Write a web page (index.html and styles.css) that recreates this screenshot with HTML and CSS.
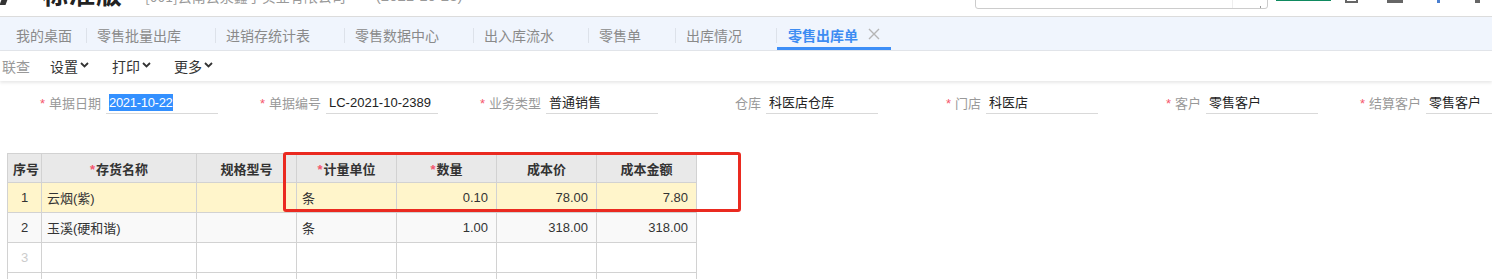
FILE: index.html
```html
<!DOCTYPE html>
<html lang="zh-CN">
<head>
<meta charset="utf-8">
<title>零售出库单</title>
<link rel="stylesheet" href="styles.css">
</head>
<body>
<header class="topbar">
  <span class="logo"></span>
  <span class="title">标准版</span>
  <span class="company">[001]云南云泉鑫宇实业有限公司</span>
  <span class="date">(2021-10-23)</span>
  <span class="spacer"></span>
  <span class="search"><span class="search-div"></span><span class="search-tick"></span></span>
  <span class="green-btn"></span>
  <span class="ico ico-a"></span>
  <span class="ico ico-b"></span>
  <span class="ico ico-c"></span>
  <span class="ico ico-d"></span>
</header>

<nav class="tabs">
  <span class="tab home">我的桌面</span><span class="sep"></span>
  <span class="tab">零售批量出库</span><span class="sep"></span>
  <span class="tab">进销存统计表</span><span class="sep"></span>
  <span class="tab">零售数据中心</span><span class="sep"></span>
  <span class="tab">出入库流水</span><span class="sep"></span>
  <span class="tab">零售单</span><span class="sep"></span>
  <span class="tab">出库情况</span><span class="sep"></span>
  <span class="tab active">零售出库单<span class="close">
    <svg width="12" height="12" viewBox="0 0 12 12"><path d="M1 1L11 11M11 1L1 11" stroke="#b5b5b5" stroke-width="1.4" fill="none"/></svg></span></span>
</nav>

<div class="toolbar">
  <span class="tool disabled">联查</span>
  <span class="tool">设置<svg class="chev" width="9" height="6" viewBox="0 0 9 6"><path d="M1 1L4.5 4.5L8 1" stroke="#333" stroke-width="1.8" fill="none"/></svg></span>
  <span class="tool">打印<svg class="chev" width="9" height="6" viewBox="0 0 9 6"><path d="M1 1L4.5 4.5L8 1" stroke="#333" stroke-width="1.8" fill="none"/></svg></span>
  <span class="tool">更多<svg class="chev" width="9" height="6" viewBox="0 0 9 6"><path d="M1 1L4.5 4.5L8 1" stroke="#333" stroke-width="1.8" fill="none"/></svg></span>
</div>

<form class="form">
  <div class="field"><label class="label"><i class="req">*</i>单据日期</label><div class="input"><span class="selected">2021-10-22</span></div></div>
  <div class="field"><label class="label"><i class="req">*</i>单据编号</label><div class="input">LC-2021-10-2389</div></div>
  <div class="field"><label class="label"><i class="req">*</i>业务类型</label><div class="input">普通销售</div></div>
  <div class="field"><label class="label">仓库</label><div class="input">科医店仓库</div></div>
  <div class="field"><label class="label"><i class="req">*</i>门店</label><div class="input">科医店</div></div>
  <div class="field"><label class="label"><i class="req">*</i>客户</label><div class="input">零售客户</div></div>
  <div class="field"><label class="label"><i class="req">*</i>结算客户</label><div class="input">零售客户</div></div>
</form>

<div class="grid-wrap">
  <table class="grid">
    <colgroup>
      <col class="c-no"><col class="c-name"><col class="c-std"><col class="c-std"><col class="c-std"><col class="c-std"><col class="c-std">
    </colgroup>
    <thead>
      <tr><th>序号</th><th><i class="req">*</i>存货名称</th><th>规格型号</th><th><i class="req">*</i>计量单位</th><th><i class="req">*</i>数量</th><th>成本价</th><th>成本金额</th></tr>
    </thead>
    <tbody>
      <tr class="current"><td class="no">1</td><td>云烟(紫)</td><td></td><td>条</td><td class="num">0.10</td><td class="num">78.00</td><td class="num">7.80</td></tr>
      <tr class="alt"><td class="no">2</td><td>玉溪(硬和谐)</td><td></td><td>条</td><td class="num">1.00</td><td class="num">318.00</td><td class="num">318.00</td></tr>
      <tr><td class="no empty">3</td><td></td><td></td><td></td><td></td><td></td><td></td></tr>
      <tr><td class="no empty">4</td><td></td><td></td><td></td><td></td><td></td><td></td></tr>
    </tbody>
  </table>
  <div class="mark"></div>
</div>
</body>
</html>
```
FILE: styles.css
```css
html, body {
  margin: 0;
  padding: 0;
  background: #fff;
  overflow: hidden;
}
body {
  font-family: "Liberation Sans", "Noto Sans CJK SC", sans-serif;
  font-size: 13px;
  color: #333;
}

/* ---------- top bar (mostly scrolled out of view) ---------- */
.topbar {
  height: 16px;
  border-bottom: 1px solid #dcdcdc;
  display: flex;
  align-items: flex-end;
  overflow: hidden;
}
.logo {
  width: 6px;
  height: 30px;
  margin: 0 0 11px 5px;
  background: #333;
  transform: skewX(-20deg);
}
.title {
  margin: 0 0 8px 31px;
  font-family: "Noto Sans CJK SC", sans-serif;
  font-weight: 700;
  font-size: 26px;
  line-height: 30px;
  color: #222;
  letter-spacing: 1px;
}
.company {
  margin: 0 0 10px 22px;
  font-family: "Noto Sans CJK SC", sans-serif;
  font-size: 14px;
  line-height: 20px;
  color: #999;
}
.date {
  margin: 0 0 10px 30px;
  font-size: 15px;
  line-height: 20px;
  color: #999;
}
.spacer { flex: 1; }
.search {
  width: 291px;
  height: 30px;
  margin-bottom: 7px;
  border: 1px solid #ccc;
  border-radius: 3px;
  display: flex;
  justify-content: flex-end;
  align-items: flex-end;
}
.search-div {
  width: 1px;
  height: 30px;
  background: #eee;
  margin-right: 27px;
}
.search-tick {
  width: 1px;
  height: 2px;
  background: #999;
  margin-right: 6px;
}
.green-btn {
  width: 55px;
  height: 30px;
  margin: 0 0 15px 8px;
  background: #139a6d;
  border-bottom: 1px solid #0f8a60;
}
.ico {
  height: 20px;
  margin-bottom: 13px;
  background: #666;
}
.ico-a { width: 13px; margin-left: 14px; border: 2px solid #666; background: #fff; box-sizing: border-box; }
.ico-b { width: 16px; margin-left: 29px; }
.ico-c { width: 3px; margin-left: 34px; background: #4a7fd0; }
.ico-d { width: 5px; margin-left: 35px; margin-right: 12px; }

/* ---------- tabs ---------- */
.tabs {
  height: 33px;
  background: #f0f5fd;
  border-bottom: 1px solid #e2e5ea;
  display: flex;
  align-items: stretch;
  font-family: "Noto Sans CJK SC", sans-serif;
  font-size: 14px;
  color: #8a8a8a;
}
.tab {
  display: flex;
  align-items: center;
  padding: 2px 34px 0 10px;
  line-height: 20px;
  white-space: nowrap;
}
.tab.home {
  padding-left: 16px;
  padding-right: 14px;
}
.sep {
  width: 1px;
  height: 15px;
  align-self: center;
  margin-top: 4px;
  background: #dde2ea;
}
.tab.active {
  padding-left: 11px;
  padding-right: 11px;
  color: #3d8cf2;
  font-weight: 700;
  box-shadow: inset 0 -3px 0 #3d8ef7;
}
.close {
  display: flex;
  margin-left: 10px;
  margin-top: -1px;
}

/* ---------- toolbar ---------- */
.toolbar {
  height: 30px;
  display: flex;
  align-items: center;
  padding-left: 2px;
  box-shadow: 0 2px 3px rgba(0, 0, 0, 0.09);
  font-family: "Noto Sans CJK SC", sans-serif;
  font-size: 14px;
  color: #333;
}
.tool {
  display: flex;
  align-items: center;
  margin-right: 23px;
  line-height: 20px;
}
.tool.disabled {
  color: #999;
  margin-right: 20px;
}
.chev {
  margin-left: 2px;
  margin-top: -2px;
}

/* ---------- form ---------- */
.form {
  display: flex;
  margin: 0;
  padding-top: 10px;
  white-space: nowrap;
}
.field {
  flex: 0 0 220px;
  display: flex;
  align-items: stretch;
}
.label {
  width: 104px;
  padding-right: 3px;
  box-sizing: border-box;
  text-align: right;
  color: #999;
  line-height: 23px;
  font-family: "Noto Sans CJK SC", sans-serif;
}
.req {
  font-style: normal;
  color: #f5566d;
  margin-right: 4px;
  font-family: "Liberation Sans", sans-serif;
}
.input {
  width: 112px;
  height: 23px;
  margin-left: 2px;
  padding-left: 3px;
  box-sizing: border-box;
  border-bottom: 1px solid #d9d9d9;
  line-height: 23px;
  color: #222;
  overflow: hidden;
}
.selected {
  background: #3390ff;
  color: #fff;
  padding: 1px 0;
  letter-spacing: -0.3px;
}

/* ---------- grid ---------- */
.grid-wrap {
  position: relative;
  margin: 38px 0 0 7px;
  width: 690px;
}
.grid {
  table-layout: fixed;
  width: 690px;
  border-collapse: collapse;
  font-size: 13px;
}
.c-no { width: 34px; }
.c-name { width: 155px; }
.c-std { width: 100px; }
.grid th,
.grid td {
  border: 1px solid #d2d2d2;
  padding: 0 5px;
  white-space: nowrap;
  overflow: hidden;
}
.grid th {
  height: 28px;
  background: #e9e9e9;
  font-weight: 700;
  color: #333;
  text-align: center;
  font-family: "Noto Sans CJK SC", sans-serif;
}
.grid th .req { margin-right: 1px; }
.grid td {
  height: 29px;
  color: #333;
  font-family: "Liberation Sans", "Noto Sans CJK SC", sans-serif;
}
.grid td.no {
  text-align: center;
  padding: 0;
}
.grid td.empty { color: #ccc; }
.grid td.num {
  text-align: right;
  padding-right: 8px;
}
.grid tr.current td { background: #fff5cb; }
.grid tr.alt td { background: #f9f9f9; }

/* red annotation box drawn over the grid */
.mark {
  position: absolute;
  left: 276px;
  top: -1px;
  width: 458px;
  height: 60px;
  box-sizing: border-box;
  border: 3px solid #ea2a20;
  border-radius: 3px;
}
```
